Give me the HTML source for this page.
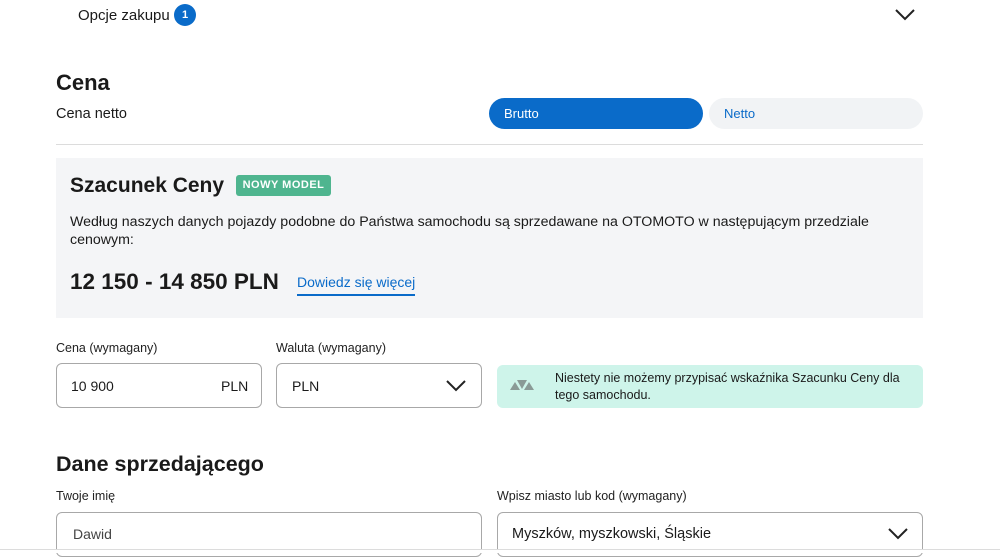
<!DOCTYPE html>
<html><head><meta charset="utf-8"><style>
*{box-sizing:border-box;margin:0;padding:0}
body{width:1000px;height:553px;overflow:hidden;background:#fff;font-family:"Liberation Sans",sans-serif;color:#1a1a1a;position:relative}
.a{position:absolute}
.lbl{font-size:12.5px;color:#222}
.inp{border:1px solid #a8a8a8;border-radius:6px;background:#fff}
</style></head><body>
<div class="a" style="left:78px;top:7px;font-size:15px">Opcje zakupu</div>
<div class="a" style="left:174px;top:4px;width:22px;height:22px;border-radius:50%;background:#0a6bc9;color:#fff;font-size:11px;font-weight:bold;text-align:center;line-height:22px">1</div>
<svg class="a" style="left:894px;top:8px" width="22" height="14" viewBox="0 0 22 14"><path d="M2 2l9 9 9-9" fill="none" stroke="#222" stroke-width="2"/></svg>
<div class="a" style="left:56px;top:70px;font-size:22px;font-weight:bold">Cena</div>
<div class="a" style="left:56px;top:106px;font-size:14.5px">Cena netto</div>
<div class="a" style="left:489px;top:98px;width:214px;height:31px;border-radius:16px;background:#0a6bc9;color:#fff;font-size:13px;line-height:31px;padding-left:15px">Brutto</div>
<div class="a" style="left:709px;top:98px;width:214px;height:31px;border-radius:16px;background:#f1f3f5;color:#0a6bc9;font-size:13px;line-height:31px;padding-left:15px">Netto</div>
<div class="a" style="left:56px;top:144px;width:867px;height:1px;background:#dcdcdc"></div>
<div class="a" style="left:56px;top:158px;width:867px;height:160px;background:#f4f5f7"></div>
<div class="a" style="left:70px;top:174px;font-size:21px;font-weight:bold">Szacunek Ceny</div>
<div class="a" style="left:236px;top:175px;width:95px;height:21px;border-radius:3px;background:#4fb58f;color:#fff;font-size:11px;font-weight:bold;line-height:21px;text-align:center;letter-spacing:.5px">NOWY MODEL</div>
<div class="a" style="left:70px;top:213px;width:830px;font-size:14.2px;line-height:18px">Według naszych danych pojazdy podobne do Państwa samochodu są sprzedawane na OTOMOTO w następującym przedziale cenowym:</div>
<div class="a" style="left:70px;top:269px;font-size:22.5px;font-weight:bold">12 150 - 14 850 PLN</div>
<div class="a" style="left:297px;top:274px;font-size:14px;color:#0a6bc9;padding-bottom:4px;border-bottom:2px solid #0a6bc9">Dowiedz się więcej</div>
<div class="a lbl" style="left:56px;top:341px">Cena (wymagany)</div>
<div class="a lbl" style="left:276px;top:341px">Waluta (wymagany)</div>
<div class="a inp" style="left:56px;top:363px;width:206px;height:45px"></div>
<div class="a" style="left:71px;top:378px;font-size:14px">10 900</div>
<div class="a" style="left:221px;top:378px;font-size:14px">PLN</div>
<div class="a inp" style="left:276px;top:363px;width:206px;height:45px"></div>
<div class="a" style="left:292px;top:378px;font-size:14px">PLN</div>
<svg class="a" style="left:445px;top:379px" width="22" height="14" viewBox="0 0 22 14"><path d="M2 2l9 9 9-9" fill="none" stroke="#222" stroke-width="2"/></svg>
<div class="a" style="left:497px;top:365px;width:426px;height:43px;border-radius:6px;background:#cef4ea"></div>
<svg class="a" style="left:510px;top:379px" width="24" height="12" viewBox="0 0 24 12"><path d="M0 11L5 3 10 11z M7 1h10l-5 9z M14 11L19 3 24 11z" fill="#8a9a96"/></svg>
<div class="a" style="left:555px;top:370px;width:360px;font-size:12.5px;line-height:17px">Niestety nie możemy przypisać wskaźnika Szacunku Ceny dla tego samochodu.</div>
<div class="a" style="left:56px;top:452px;font-size:21.5px;font-weight:bold">Dane sprzedającego</div>
<div class="a lbl" style="left:56px;top:489px">Twoje imię</div>
<div class="a lbl" style="left:497px;top:489px">Wpisz miasto lub kod (wymagany)</div>
<div class="a inp" style="left:56px;top:512px;width:426px;height:45px"></div>
<div class="a" style="left:73px;top:526px;font-size:14px;color:#444">Dawid</div>
<div class="a inp" style="left:497px;top:512px;width:426px;height:45px"></div>
<div class="a" style="left:512px;top:526px;font-size:14.5px">Myszków, myszkowski, Śląskie</div>
<svg class="a" style="left:887px;top:527px" width="22" height="14" viewBox="0 0 22 14"><path d="M2 2l9 9 9-9" fill="none" stroke="#222" stroke-width="2"/></svg>
<div class="a" style="left:0;top:549px;width:1000px;height:4px;background:#fff;border-top:1px solid #dcdcdc"></div>
</body></html>
